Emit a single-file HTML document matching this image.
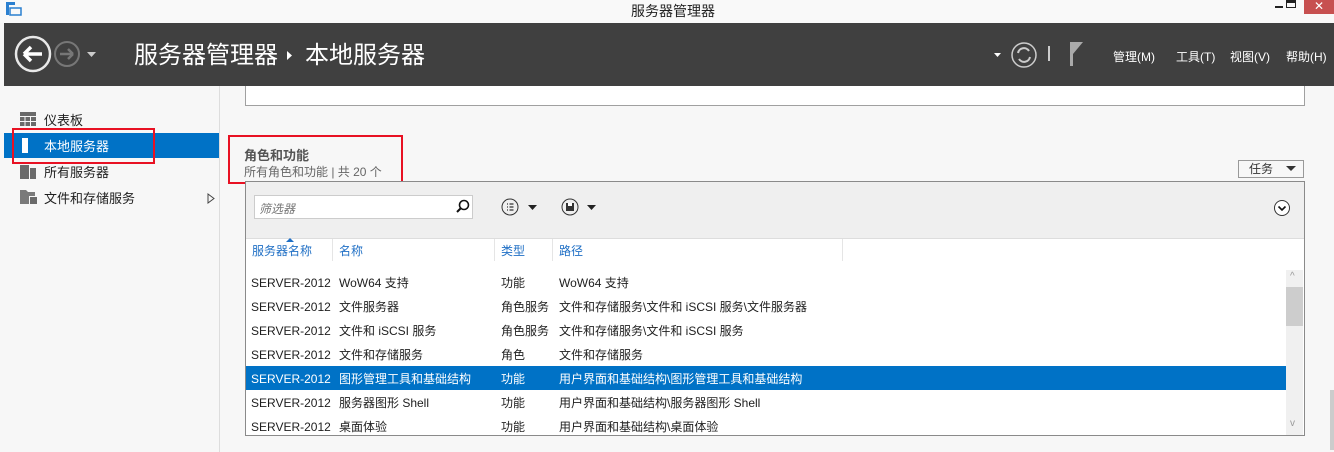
<!DOCTYPE html>
<html><head><meta charset="utf-8"><style>
*{margin:0;padding:0;box-sizing:border-box}
body{width:1334px;height:452px;overflow:hidden;background:#f7f7f7;font-family:"Liberation Sans","Noto Sans CJK SC",sans-serif;position:relative;font-size:12px;color:#1e1e1e}
.a{position:absolute;white-space:nowrap}
</style></head><body>
<div class="a" style="left:0;top:0;width:1334px;height:23px;background:#f9f9f9"></div>
<div class="a" style="left:631px;top:1px;font-size:14px;color:#222">服务器管理器</div>
<svg class="a" style="left:6px;top:2px" width="16" height="14"><rect x="0" y="0" width="3" height="13" fill="#2b80d0"/><rect x="0" y="0" width="9" height="3" fill="#2b80d0"/><rect x="4" y="6" width="11" height="7" fill="none" stroke="#2b80d0" stroke-width="1.5"/></svg>
<div class="a" style="left:1275px;top:6px;width:8px;height:2px;background:#222"></div>
<div class="a" style="left:1286px;top:0;width:10px;height:8px;border:1px solid #222;border-top:3px solid #222"></div>
<div class="a" style="left:1304px;top:0;width:30px;height:14px;background:#c75050;color:#fff;text-align:center;font-size:12px;line-height:12px">✕</div>
<div class="a" style="left:4px;top:23px;width:1330px;height:63px;background:#404040"></div>
<svg class="a" style="left:14px;top:35px" width="90" height="40"><circle cx="19" cy="19" r="17" fill="none" stroke="#e8e8e8" stroke-width="2.5"/><path d="M10 19h18M10 19l7-7M10 19l7 7" stroke="#fff" stroke-width="3.5" fill="none"/><circle cx="53" cy="19" r="12" fill="none" stroke="#777" stroke-width="2"/><path d="M46 19h13M59 19l-5-5M59 19l-5 5" stroke="#777" stroke-width="2.5" fill="none"/><path d="M73 17h9l-4.5 5z" fill="#ccc"/></svg>
<div class="a" style="left:134px;top:40px;font-size:24px;color:#fff;line-height:32px">服务器管理器</div>
<svg class="a" style="left:287px;top:51px" width="6" height="9"><path d="M0 0l5 4.5L0 9z" fill="#fff"/></svg>
<div class="a" style="left:305px;top:40px;font-size:24px;color:#fff;line-height:32px">本地服务器</div>
<svg class="a" style="left:992px;top:40px" width="110" height="32"><path d="M2 13h7l-3.5 4z" fill="#fff"/><circle cx="32" cy="15" r="12" fill="none" stroke="#ccc" stroke-width="1.5"/><path d="M26 13a6 6 0 0 1 11-2M38 17a6 6 0 0 1-11 2" stroke="#ccc" stroke-width="2" fill="none"/><rect x="56" y="6" width="2" height="15" fill="#ccc"/><rect x="78" y="2" width="3" height="24" fill="#aaa"/><path d="M81 2h10l-10 12z" fill="#aaa"/></svg>
<div class="a" style="left:1113px;top:48px;color:#fff;font-size:12px">管理(M)</div>
<div class="a" style="left:1176px;top:48px;color:#fff;font-size:12px">工具(T)</div>
<div class="a" style="left:1230px;top:48px;color:#fff;font-size:12px">视图(V)</div>
<div class="a" style="left:1286px;top:48px;color:#fff;font-size:12px">帮助(H)</div>
<div class="a" style="left:219px;top:86px;width:1px;height:366px;background:#ddd"></div>
<svg class="a" style="left:20px;top:112px" width="16" height="14"><path d="M0 0h16v14H0z" fill="#6a6a6a"/><path d="M0 4.5h16M0 9.5h16M5 4.5v10M10.5 4.5v10" stroke="#f7f7f7" stroke-width="1"/></svg>
<div class="a" style="left:44px;top:110px;font-size:13px">仪表板</div>
<div class="a" style="left:4px;top:133px;width:215px;height:25px;background:#0072c6"></div>
<div class="a" style="left:22px;top:138px;width:6px;height:15px;background:#fff"></div>
<div class="a" style="left:44px;top:136px;font-size:13px;color:#fff">本地服务器</div>
<div class="a" style="left:12px;top:128px;width:143px;height:36px;border:2px solid #e81123"></div>
<svg class="a" style="left:20px;top:165px" width="16" height="14"><path d="M0 0h9v14H0zM10 3h6v11h-6z" fill="#6a6a6a"/></svg>
<div class="a" style="left:44px;top:162px;font-size:13px">所有服务器</div>
<svg class="a" style="left:20px;top:190px" width="18" height="14"><path d="M0 0h6l2 2h7v4h-6v8H0z" fill="#7a7a7a"/><path d="M10 7h7v7h-7z" fill="#6a6a6a"/></svg>
<div class="a" style="left:44px;top:188px;font-size:13px">文件和存储服务</div>
<svg class="a" style="left:207px;top:193px" width="8" height="11"><path d="M1 1l6 4.5L1 10z" fill="none" stroke="#444"/></svg>
<div class="a" style="left:245px;top:86px;width:1060px;height:20px;background:#fff;border:1px solid #a0a0a0;border-top:none"></div>
<div class="a" style="left:244px;top:145px;font-size:13px;font-weight:bold;color:#555">角色和功能</div>
<div class="a" style="left:244px;top:163px;font-size:12px;color:#666">所有角色和功能 | 共 20 个</div>
<div class="a" style="left:228px;top:135px;width:175px;height:49px;border:2px solid #e81123"></div>
<div class="a" style="left:1238px;top:160px;width:66px;height:18px;border:1px solid #999;background:#f7f7f7;padding-left:10px;font-size:12px;line-height:16px;color:#333">任务</div>
<svg class="a" style="left:1286px;top:166px" width="10" height="6"><path d="M0 0h10L5 5z" fill="#333"/></svg>
<div class="a" style="left:245px;top:181px;width:1060px;height:255px;border:1px solid #8a8a8a;background:#fff"></div>
<div class="a" style="left:246px;top:182px;width:1058px;height:56px;background:#efefef"></div>
<div class="a" style="left:254px;top:195px;width:219px;height:24px;background:#fff;border:1px solid #ccc"></div>
<div class="a" style="left:259px;top:200px;font-style:italic;color:#777;font-size:12px">筛选器</div>
<svg class="a" style="left:456px;top:199px" width="14" height="14"><circle cx="8" cy="6" r="4.5" fill="none" stroke="#111" stroke-width="1.6"/><path d="M5 9l-4 4" stroke="#111" stroke-width="2"/></svg>
<svg class="a" style="left:500px;top:197px" width="110" height="20"><circle cx="10" cy="10" r="8" fill="none" stroke="#333"/><path d="M7 7h1M9.5 7h4M7 10h1M9.5 10h4M7 13h1M9.5 13h4" stroke="#333" stroke-width="1.3"/><path d="M28 8h9l-4.5 5z" fill="#222"/><circle cx="70" cy="10" r="8" fill="none" stroke="#333"/><path d="M66 6h8v8h-8z" fill="#333"/><path d="M68 6h4v3h-4z" fill="#fff"/><path d="M87 8h9l-4.5 5z" fill="#222"/></svg>
<svg class="a" style="left:1273px;top:199px" width="18" height="18"><circle cx="9" cy="9" r="7.5" fill="#fff" stroke="#333"/><path d="M5.5 7.5l3.5 3.5 3.5-3.5" stroke="#111" stroke-width="1.6" fill="none"/></svg>
<div class="a" style="left:246px;top:238px;width:1058px;height:1px;background:#ddd"></div>
<div class="a" style="left:332px;top:239px;width:1px;height:22px;background:#e5e5e5"></div>
<div class="a" style="left:494px;top:239px;width:1px;height:22px;background:#e5e5e5"></div>
<div class="a" style="left:552px;top:239px;width:1px;height:22px;background:#e5e5e5"></div>
<div class="a" style="left:842px;top:239px;width:1px;height:22px;background:#e5e5e5"></div>
<svg class="a" style="left:286px;top:238px" width="8" height="4"><path d="M0 4h8L4 0z" fill="#1f6fc5"/></svg>
<div class="a" style="left:252px;top:242px;color:#1f6fc5;font-size:12px">服务器名称</div>
<div class="a" style="left:339px;top:242px;color:#1f6fc5;font-size:12px">名称</div>
<div class="a" style="left:501px;top:242px;color:#1f6fc5;font-size:12px">类型</div>
<div class="a" style="left:559px;top:242px;color:#1f6fc5;font-size:12px">路径</div>
<div class="a" style="left:246px;top:366px;width:1040px;height:24px;background:#0072c6"></div>
<div class="a" style="left:1286px;top:270px;width:17px;height:165px;background:#f0f0f0"></div>
<div class="a" style="left:1286px;top:287px;width:17px;height:39px;background:#cdcdcd"></div>
<div class="a" style="left:1290px;top:271px;color:#999;font-size:10px">^</div>
<div class="a" style="left:1290px;top:418px;color:#999;font-size:10px">v</div>
<div class="a" style="left:1330px;top:390px;width:4px;height:60px;background:#ccc"></div>
<div class="a" style="left:251px;top:271px;line-height:24px;font-size:12px">SERVER-2012<br>SERVER-2012<br>SERVER-2012<br>SERVER-2012<br><span style="color:#fff">SERVER-2012</span><br>SERVER-2012<br>SERVER-2012</div>
<div class="a" style="left:339px;top:271px;line-height:24px;font-size:12px">WoW64 支持<br>文件服务器<br>文件和 iSCSI 服务<br>文件和存储服务<br><span style="color:#fff">图形管理工具和基础结构</span><br>服务器图形 Shell<br>桌面体验</div>
<div class="a" style="left:501px;top:271px;line-height:24px;font-size:12px">功能<br>角色服务<br>角色服务<br>角色<br><span style="color:#fff">功能</span><br>功能<br>功能</div>
<div class="a" style="left:559px;top:271px;line-height:24px;font-size:12px">WoW64 支持<br>文件和存储服务\文件和 iSCSI 服务\文件服务器<br>文件和存储服务\文件和 iSCSI 服务<br>文件和存储服务<br><span style="color:#fff">用户界面和基础结构\图形管理工具和基础结构</span><br>用户界面和基础结构\服务器图形 Shell<br>用户界面和基础结构\桌面体验</div>
</body></html>
